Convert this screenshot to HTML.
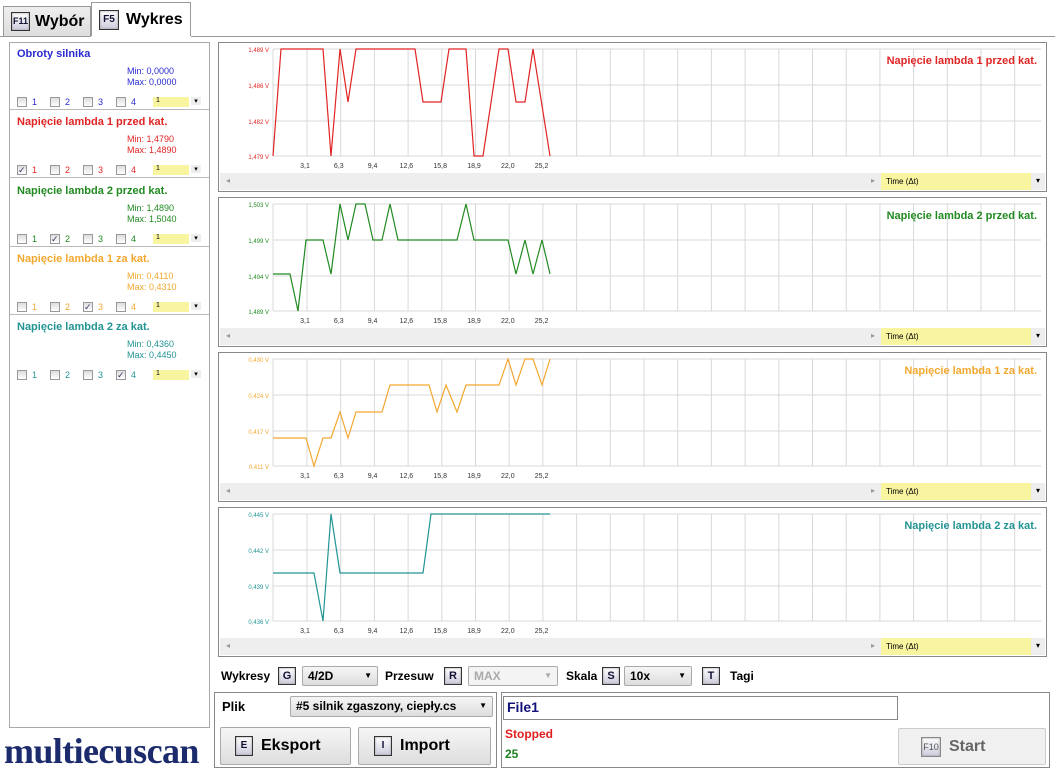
<!DOCTYPE html>
<html><head><meta charset="utf-8"><style>
*{box-sizing:border-box;margin:0;padding:0}
body{width:1055px;height:768px;background:#fff;font-family:"Liberation Sans",Arial,sans-serif;position:relative;overflow:hidden}
.abs{position:absolute}
.tab{position:absolute;top:3px;height:33px;border:1px solid #999;border-bottom:none;font-weight:bold;font-size:16px;display:flex;align-items:center;padding-left:7px;white-space:nowrap}
.key{display:inline-block;border:1px solid #333;background:linear-gradient(#fff,#ccd);color:#113;font-weight:bold;text-align:center;font-size:11px;box-shadow:inset 0 0 2px #999}
.sec{position:absolute;left:10px;width:199px;border-bottom:1px solid #bbb;font-size:9px}
.sec .t{position:absolute;left:7px;top:6px;font-size:11px;font-weight:bold}
.sec .mm{position:absolute;left:117px;top:24px;line-height:11px}
.sec .cb{position:absolute;top:55px;display:flex;align-items:center;gap:5px}
.cbx{width:10px;height:10px;border:1px solid #999;background:linear-gradient(#ddd,#fff);font-size:9px;line-height:9px;color:#336}
.ysel{position:absolute;left:143px;top:55px;width:36px;height:10px;background:#f8f4a0;font-size:7px;padding-left:3px;color:#000}
.ysel:after{content:"▾";position:absolute;right:-12px;width:10px;background:#eee;text-align:center;color:#000}
.panel{position:absolute;left:218px;width:829px;height:150px;border:1px solid #888}
.sb{position:absolute;left:1px;right:1px;top:130px;height:17px;background:#eee;font-size:9px}
.tm{position:absolute;left:661px;top:0;width:150px;height:17px;background:#f8f4a0;line-height:17px;padding-left:5px;font-size:8px}
.btn{position:absolute;border:1px solid #aaa;background:linear-gradient(#f6f6f6,#ddd);border-radius:2px;font-weight:bold;display:flex;align-items:center}
.dd{position:absolute;border:1px solid #aaa;background:linear-gradient(#f6f6f6,#ddd);font-size:12px;font-weight:bold;padding-left:5px;line-height:18px;border-radius:2px}
.tl{position:absolute;font-size:12px;font-weight:bold;top:669px}
</style></head><body>
<div class="tab" style="left:3px;width:88px;top:6px;height:30px;background:linear-gradient(#eee,#ddd)"><span class="key" style="width:19px;height:19px;line-height:17px;font-size:9px;margin-right:5px">F11</span>Wybór</div>
<div class="tab" style="left:91px;width:100px;background:#fff;height:34px;top:2px"><span class="key" style="width:20px;height:20px;line-height:18px;font-size:10px;margin-right:7px">F5</span>Wykres</div>
<div class="abs" style="left:0;top:36px;width:91px;border-top:1px solid #999"></div>
<div class="abs" style="left:191px;top:36px;width:864px;border-top:1px solid #999"></div>
<div class="abs" style="left:9px;top:42px;width:201px;height:686px;border:1px solid #aaa"></div>
<div id="secs"></div>
<div id="charts"></div>

<div class="tl" style="left:221px">Wykresy</div>
<span class="key abs" style="left:278px;top:667px;width:18px;height:18px;line-height:16px">G</span>
<div class="dd" style="left:302px;top:666px;width:76px;height:20px">4/2D<span style="position:absolute;right:5px;font-size:8px">▼</span></div>
<div class="tl" style="left:385px">Przesuw</div>
<span class="key abs" style="left:444px;top:667px;width:18px;height:18px;line-height:16px">R</span>
<div class="dd" style="left:468px;top:666px;width:90px;height:20px;color:#aaa;background:#f4f4f4">MAX<span style="position:absolute;right:5px;font-size:8px">▼</span></div>
<div class="tl" style="left:566px">Skala</div>
<span class="key abs" style="left:602px;top:667px;width:18px;height:18px;line-height:16px">S</span>
<div class="dd" style="left:624px;top:666px;width:68px;height:20px">10x<span style="position:absolute;right:5px;font-size:8px">▼</span></div>
<span class="key abs" style="left:702px;top:667px;width:18px;height:18px;line-height:16px">T</span>
<div class="tl" style="left:730px">Tagi</div>

<div class="abs" style="left:214px;top:692px;width:283px;height:76px;border:1px solid #888"></div>
<div class="abs" style="left:222px;top:699px;font-size:13px;font-weight:bold">Plik</div>
<div class="dd" style="left:290px;top:696px;width:203px;height:21px;font-size:12px">#5 silnik zgaszony, ciepły.cs<span style="position:absolute;right:5px;font-size:8px">▼</span></div>
<div class="btn" style="left:220px;top:727px;width:131px;height:38px;font-size:16px"><span class="key" style="width:18px;height:20px;line-height:18px;margin:0 8px 0 14px;font-size:10px">E</span>Eksport</div>
<div class="btn" style="left:358px;top:727px;width:133px;height:38px;font-size:16px"><span class="key" style="width:18px;height:20px;line-height:18px;margin:0 8px 0 15px;font-size:10px">I</span>Import</div>
<div class="abs" style="left:4px;top:731px;font-family:'Liberation Serif',serif;font-size:36px;font-weight:bold;color:#1c2b6b;letter-spacing:-0.6px;line-height:40px">multiecuscan</div>

<div class="abs" style="left:501px;top:692px;width:549px;height:76px;border:1px solid #888"></div>
<div class="abs" style="left:503px;top:696px;width:395px;height:24px;border:1px solid #888;font-size:14px;font-weight:bold;color:#12127a;padding:2px 3px">File1</div>
<div class="abs" style="left:505px;top:727px;font-size:12px;font-weight:bold;color:#e02020">Stopped</div>
<div class="abs" style="left:505px;top:747px;font-size:12px;font-weight:bold;color:#208020">25</div>
<div class="btn" style="left:898px;top:728px;width:148px;height:37px;font-size:16px;color:#666;background:#f0f0f0;border-color:#ccc"><span class="key" style="width:20px;height:20px;line-height:18px;margin:0 8px 0 22px;font-size:9px;color:#555;border-color:#888;font-weight:normal">F10</span>Start</div>

<script>
var S=[["Obroty silnika","#2a2ad0","0,0000","0,0000",-1,42],["Napięcie lambda 1 przed kat.","#e02424","1,4790","1,4890",0,110],["Napięcie lambda 2 przed kat.","#218a21","1,4890","1,5040",1,179],["Napięcie lambda 1 za kat.","#f2a830","0,4110","0,4310",2,247],["Napięcie lambda 2 za kat.","#239494","0,4360","0,4450",3,315]];
var h="";
S.forEach(function(s,i){
 h+='<div class="sec" style="top:'+s[5]+'px;height:'+(i==4?412:68)+'px;color:'+s[1]+(i==4?';border-bottom:none':'')+'"><div class="t">'+s[0]+'</div><div class="mm">Min: '+s[2]+'<br>Max: '+s[3]+'</div>';
 for(var k=0;k<4;k++){h+='<div class="cb" style="left:'+(7+k*33)+'px"><div class="cbx">'+(k==s[4]?'✓':'')+'</div>'+(k+1)+'</div>';}
 h+='<div class="ysel">1</div></div>';
});
document.getElementById("secs").innerHTML=h;
var C=[
["Napięcie lambda 1 przed kat.","#e02424",["1,489 V","1,486 V","1,482 V","1,479 V"],"272,155 280,48 322,48 330,155 339,48 347,101 355,48 414,48 422,101 440,101 448,48 465,48 473,155 482,155 498,48 507,48 515,101 524,101 532,48 549,155"],
["Napięcie lambda 2 przed kat.","#218a21",["1,503 V","1,499 V","1,494 V","1,489 V"],"272,118 289,118 297,155 305,84 322,84 330,118 339,48 347,84 355,48 364,48 372,84 381,84 389,48 397,84 456,84 465,48 473,84 507,84 515,118 524,84 532,118 541,84 549,118"],
["Napięcie lambda 1 za kat.","#f2a830",["0,430 V","0,424 V","0,417 V","0,411 V"],"272,127 305,127 313,155 322,127 330,127 339,101 347,127 355,101 381,101 389,74 428,74 436,101 445,74 456,101 465,74 498,74 507,48 515,74 524,48 532,48 541,74 549,48"],
["Napięcie lambda 2 za kat.","#239494",["0,445 V","0,442 V","0,439 V","0,436 V"],"272,107 313,107 322,155 330,48 339,107 422,107 430,48 549,48"]];
var g="";
C.forEach(function(c,i){
 var top=42+i*155;
 var svg='<svg width="829" height="130" style="position:absolute;left:0;top:0">';
 var ox=218;
 for(var x=0;x<23;x++){var gx=306+x*33.7-ox;if(gx<825)svg+='<line x1="'+gx+'" y1="6" x2="'+gx+'" y2="113" stroke="#d8d8d8"/>';}
 [6,42,78,113].forEach(function(y,j){svg+='<line x1="54" y1="'+y+'" x2="822" y2="'+y+'" stroke="#d8d8d8"/><text x="50" y="'+(y+3)+'" font-size="6" fill="'+c[1]+'" text-anchor="end" font-family="Liberation Sans">'+c[2][j]+'</text>';});
 svg+='<line x1="54" y1="6" x2="54" y2="113" stroke="#d8d8d8"/>';
 ["3,1","6,3","9,4","12,6","15,8","18,9","22,0","25,2"].forEach(function(t,j){svg+='<text x="'+(304+j*33.8-ox)+'" y="125" font-size="7" fill="#333" text-anchor="middle" font-family="Liberation Sans">'+t+'</text>';});
 var pts=c[3].split(" ").map(function(p){var a=p.split(",");return (a[0]-ox)+","+(a[1]-42);}).join(" ");
 svg+='<polyline points="'+pts+'" fill="none" stroke="'+c[1]+'" stroke-width="1.2"/>';
 svg+='<text x="818" y="21" font-size="11" font-weight="bold" fill="'+c[1]+'" text-anchor="end" font-family="Liberation Sans">'+c[0]+'</text></svg>';
 g+='<div class="panel" style="top:'+top+'px">'+svg+'<div class="sb"><span style="position:absolute;left:6px;top:3px;color:#999;font-size:8px">◂</span><span style="position:absolute;left:651px;top:3px;color:#999;font-size:8px">▸</span><div class="tm">Time (Δt)</div><span style="position:absolute;right:5px;top:3px;font-size:8px">▾</span></div></div>';
});
document.getElementById("charts").innerHTML=g;
</script>
</body></html>
